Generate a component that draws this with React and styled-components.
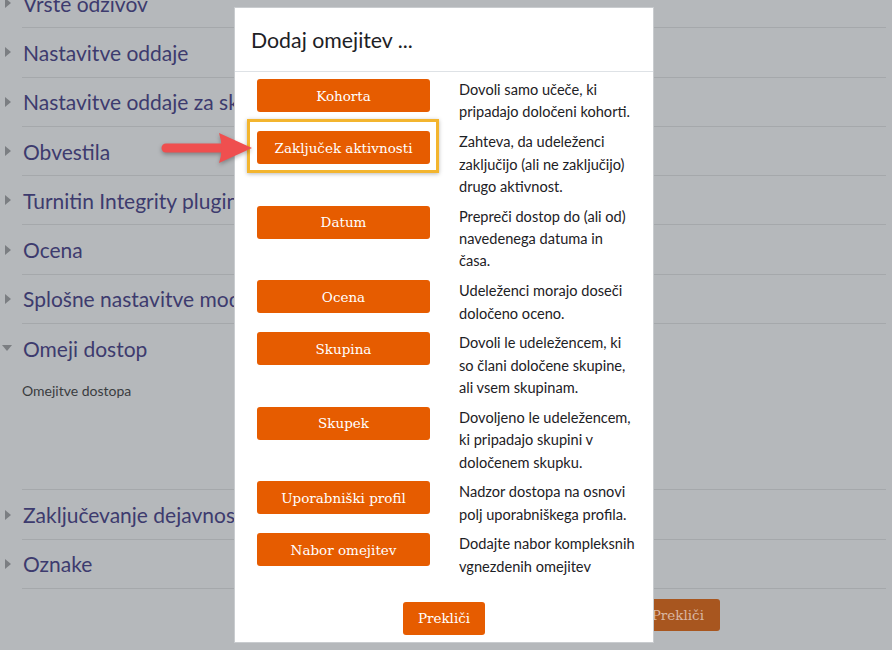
import React from "react";
import styled, { createGlobalStyle } from "styled-components";

const GlobalStyle = createGlobalStyle`
  html, body { margin: 0; padding: 0; }
  body {
    background: #b5b8bb;
    overflow: hidden;
    font-family: Lato, "Noto Sans", sans-serif;
  }
`;

const Screen = styled.div`
  position: relative;
  width: 892px;
  height: 650px;
  overflow: hidden;
  background: #b5b8bb;
`;

const Page = styled.div`
  margin-top: -21px;
  padding-right: 6px;
`;

const Section = styled.section`
  margin-left: 22px;
  border-bottom: 1px solid #a5a8ab;
`;

const SectionHeader = styled.div`
  display: flex;
  align-items: center;
  height: 48.3px;
  white-space: nowrap;
`;

const Caret = styled.span`
  display: flex;
  align-items: center;
  width: 18px;
  margin-left: ${(p) => (p.$open ? "-20px" : "-17px")};
  margin-right: ${(p) => (p.$open ? "3px" : "0")};
`;

const SectionTitle = styled.h3`
  margin: 0;
  font-family: Lato, "Noto Sans", sans-serif;
  font-weight: 400;
  font-size: 21px;
  color: #3d3b6e;
`;

const SectionBody = styled.div`
  min-height: 109px;
  padding-top: 8px;
  font-size: 14px;
  line-height: 21px;
  color: #3a3c40;
`;

const FormButtons = styled.div`
  display: flex;
  justify-content: flex-end;
  padding: 10px 166px 0 0;
`;

const DimButton = styled.button`
  height: 32px;
  padding: 0 16px 0 12px;
  border: 0;
  border-radius: 3px;
  background: #a8561f;
  color: #d9b6a3;
  font-family: "DejaVu Serif", serif;
  font-size: 13.5px;
`;

const Modal = styled.div`
  position: absolute;
  left: 234px;
  top: 7px;
  width: 420px;
  box-sizing: border-box;
  background: #fff;
  border: 1px solid #c9cccf;
  display: flex;
  flex-direction: column;
`;

const ModalHeader = styled.div`
  padding: 16px 16px 15px 16px;
  border-bottom: 1px solid #dee2e6;
`;

const ModalTitle = styled.h5`
  margin: 0;
  font-family: Lato, "Noto Sans", sans-serif;
  font-weight: 400;
  font-size: 21.3px;
  line-height: 32px;
  color: #1d2125;
`;

const ModalBody = styled.div`
  padding: 7px 16px 0 22px;
`;

const OptionRow = styled.div`
  display: grid;
  grid-template-columns: 173px 176px;
  column-gap: 29px;
  align-items: start;
  margin-bottom: 7.3px;
`;

const ButtonCell = styled.div`
  position: relative;
`;

const Highlight = styled.div`
  position: absolute;
  top: -12px;
  left: -10px;
  right: -9px;
  bottom: -9px;
  border: 3px solid #f3b52f;
  box-shadow: 0 1px 4px rgba(0, 0, 0, 0.28);
  pointer-events: none;
`;

const OrangeButton = styled.button`
  display: block;
  width: ${(p) => (p.$auto ? "auto" : "100%")};
  height: 33px;
  padding: 0 ${(p) => (p.$auto ? "15px" : "6px")};
  border: 0;
  border-radius: 3px;
  background: #e65c00;
  color: #fff;
  font-family: "DejaVu Serif", serif;
  font-size: 13.5px;
  white-space: nowrap;
  cursor: pointer;
`;

const Description = styled.div`
  font-family: Lato, "Noto Sans", sans-serif;
  font-size: 14.6px;
  line-height: 22.4px;
  color: #1d2125;
`;

const ModalFooter = styled.div`
  display: flex;
  justify-content: center;
  padding: 16px 16px 7px;
`;

const Arrow = styled.svg`
  position: absolute;
  left: 156px;
  top: 130px;
  filter: drop-shadow(0 2px 2px rgba(0, 0, 0, 0.3));
`;

const sections = [
  "Vrste odzivov",
  "Nastavitve oddaje",
  "Nastavitve oddaje za skupine",
  "Obvestila",
  "Turnitin Integrity plugin",
  "Ocena",
  "Splošne nastavitve modula",
];

const options = [
  { label: "Kohorta", text: "Dovoli samo učeče, ki pripadajo določeni kohorti." },
  {
    label: "Zaključek aktivnosti",
    text: "Zahteva, da udeleženci zaključijo (ali ne zaključijo) drugo aktivnost.",
    highlight: true,
  },
  { label: "Datum", text: "Prepreči dostop do (ali od) navedenega datuma in časa." },
  { label: "Ocena", text: "Udeleženci morajo doseči določeno oceno." },
  { label: "Skupina", text: "Dovoli le udeležencem, ki so člani določene skupine, ali vsem skupinam." },
  { label: "Skupek", text: "Dovoljeno le udeležencem, ki pripadajo skupini v določenem skupku." },
  { label: "Uporabniški profil", text: "Nadzor dostopa na osnovi polj uporabniškega profila." },
  { label: "Nabor omejitev", text: "Dodajte nabor kompleksnih vgnezdenih omejitev" },
];

function CaretIcon({ open }) {
  return open ? (
    <svg width="10" height="6" viewBox="0 0 10 6">
      <path d="M0 0 L10 0 L5 6 Z" fill="#7b7e82" />
    </svg>
  ) : (
    <svg width="6" height="10" viewBox="0 0 6 10">
      <path d="M0 0 L6 5 L0 10 Z" fill="#7b7e82" />
    </svg>
  );
}

function CollapsedSection({ title }) {
  return (
    <Section>
      <SectionHeader>
        <Caret>
          <CaretIcon />
        </Caret>
        <SectionTitle>{title}</SectionTitle>
      </SectionHeader>
    </Section>
  );
}

export default function App() {
  return (
    <>
      <GlobalStyle />
      <Screen>
        <Page>
          {sections.map((s) => (
            <CollapsedSection key={s} title={s} />
          ))}
          <Section>
            <SectionHeader>
              <Caret $open>
                <CaretIcon open />
              </Caret>
              <SectionTitle>Omeji dostop</SectionTitle>
            </SectionHeader>
            <SectionBody>Omejitve dostopa</SectionBody>
          </Section>
          <CollapsedSection title="Zaključevanje dejavnosti" />
          <CollapsedSection title="Oznake" />
          <FormButtons>
            <DimButton>Prekliči</DimButton>
          </FormButtons>
        </Page>

        <Modal role="dialog">
          <ModalHeader>
            <ModalTitle>Dodaj omejitev ...</ModalTitle>
          </ModalHeader>
          <ModalBody>
            {options.map((o) => (
              <OptionRow key={o.label}>
                <ButtonCell>
                  {o.highlight && <Highlight />}
                  <OrangeButton>{o.label}</OrangeButton>
                </ButtonCell>
                <Description>{o.text}</Description>
              </OptionRow>
            ))}
          </ModalBody>
          <ModalFooter>
            <OrangeButton $auto>Prekliči</OrangeButton>
          </ModalFooter>
        </Modal>

        <Arrow width="100" height="36" viewBox="0 0 100 36">
          <line x1="10" y1="18" x2="70" y2="18" stroke="#ef4f4f" strokeWidth="9" strokeLinecap="round" />
          <path d="M63 3 Q68 18 63 33 L96 18 Z" fill="#ef4f4f" />
        </Arrow>
      </Screen>
    </>
  );
}
